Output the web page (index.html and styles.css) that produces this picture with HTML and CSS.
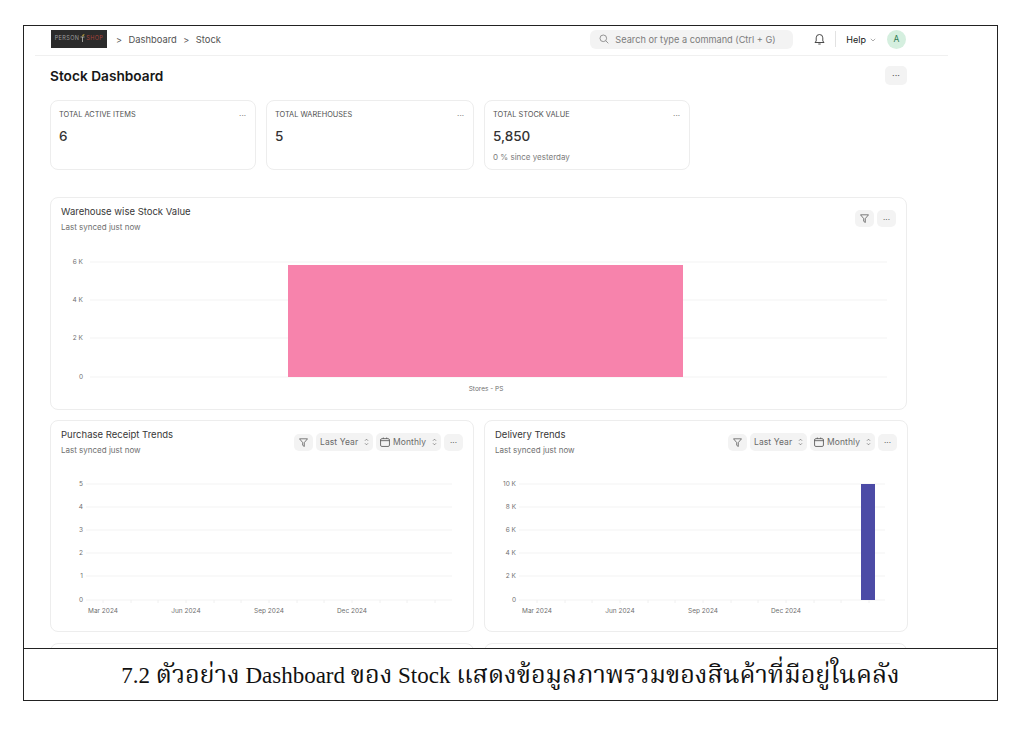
FILE: index.html
```html
<!DOCTYPE html>
<html lang="th">
<head>
<meta charset="utf-8">
<title>Stock Dashboard</title>
<link rel="stylesheet" href="styles.css">
</head>
<body>
<div class="frame">
  <div class="screen">
    <header class="navbar">
      <div class="logo"><span class="logo-a">PERSON</span><svg class="logo-mark" width="5" height="8" viewBox="0 0 5 8"><path d="M.5 3h4M2.500 3v5" stroke="#bdbdb5" stroke-width=".8" fill="none"/><path d="M2 2.500C2 1 3 0 4.500 0C4.500 1.500 3.500 2.500 2 2.500Z" fill="#a8923a"/></svg><span class="logo-b">SHOP</span></div>
      <nav class="crumbs">
        <span class="sep">&gt;</span><span>Dashboard</span><span class="sep">&gt;</span><span>Stock</span>
      </nav>
      <div class="nav-right">
        <div class="search">
          <svg class="ico" width="10" height="10" viewBox="0 0 10 10"><circle cx="4.300" cy="4.300" r="3.300" fill="none" stroke="#7c7c7c" stroke-width=".8"/><path d="M6.800 6.800L9.300 9.300" stroke="#7c7c7c" stroke-width=".8"/></svg>
          <span>Search or type a command (Ctrl + G)</span>
        </div>
        <svg class="bell" width="11" height="12" viewBox="0 0 11 12"><path d="M1 9.500h9L8.800 8V4.800a3.300 3.300 0 0 0-6.600 0V8ZM4.300 11h2.400" fill="none" stroke="#383838" stroke-width=".9"/></svg>
        <span class="vline"></span>
        <span class="help">Help</span>
        <svg class="chev" width="6" height="4" viewBox="0 0 6 4"><path d="M.8.8L3 3l2.200-2.200" fill="none" stroke="#8a8a8a" stroke-width=".7"/></svg>
        <span class="avatar">A</span>
      </div>
    </header>

    <main class="main">
      <div class="title-row">
        <h1>Stock Dashboard</h1>
        <span class="btn btn-more">···</span>
      </div>

      <section class="stats">
        <article class="stat">
          <div class="stat-head"><span>TOTAL ACTIVE ITEMS</span><i>···</i></div>
          <div class="stat-num">6</div>
        </article>
        <article class="stat">
          <div class="stat-head"><span>TOTAL WAREHOUSES</span><i>···</i></div>
          <div class="stat-num">5</div>
        </article>
        <article class="stat">
          <div class="stat-head"><span>TOTAL STOCK VALUE</span><i>···</i></div>
          <div class="stat-num">5,850</div>
          <div class="stat-sub">0 % since yesterday</div>
        </article>
      </section>

      <section class="card card-wide">
        <div class="card-head">
          <div>
            <h2>Warehouse wise Stock Value</h2>
            <p>Last synced just now</p>
          </div>
          <div class="tools">
            <span class="btn btn-icon"><svg width="9" height="9" viewBox="0 0 9 9"><path d="M.5.8h8L5.300 4.600v3.900L3.700 7.300V4.600Z" fill="none" stroke="#4a4a4a" stroke-width=".7"/></svg></span>
            <span class="btn btn-icon">···</span>
          </div>
        </div>
        <svg class="plot" viewBox="0 1 855 165" width="855" height="165">
          <g class="grid">
            <line x1="39" x2="836" y1="17" y2="17"/><line x1="39" x2="836" y1="55" y2="55"/><line x1="39" x2="836" y1="93" y2="93"/><line x1="39" x2="836" y1="132" y2="132"/>
          </g>
          <rect x="237" y="20" width="395" height="112" fill="#f783ac"/>
          <g class="axis" text-anchor="end">
            <text x="32" y="19">6 K</text><text x="32" y="57">4 K</text><text x="32" y="95">2 K</text><text x="32" y="134">0</text>
          </g>
          <text class="axis" x="435" y="146" text-anchor="middle">Stores - PS</text>
        </svg>
      </section>

      <section class="row">
        <article class="card">
          <div class="card-head">
            <div>
              <h2>Purchase Receipt Trends</h2>
              <p>Last synced just now</p>
            </div>
            <div class="tools">
              <span class="btn btn-icon"><svg width="9" height="9" viewBox="0 0 9 9"><path d="M.5.8h8L5.300 4.600v3.900L3.700 7.300V4.600Z" fill="none" stroke="#4a4a4a" stroke-width=".7"/></svg></span>
              <span class="btn btn-sel">Last Year <svg class="updown" width="5" height="8" viewBox="0 0 5 8"><path d="M1 2.700L2.500 1.200 4 2.700M1 5.300L2.500 6.800 4 5.300" fill="none" stroke="#666" stroke-width=".7"/></svg></span>
              <span class="btn btn-sel btn-month"><svg width="10" height="10" viewBox="0 0 9 9"><rect x=".5" y="1.500" width="8" height="7" rx="1.200" fill="none" stroke="#4a4a4a" stroke-width=".7"/><path d="M.5 3.300h8M3 .5v1M6 .5v1" stroke="#4a4a4a" stroke-width=".7"/></svg>Monthly <svg class="updown" width="5" height="8" viewBox="0 0 5 8"><path d="M1 2.700L2.500 1.200 4 2.700M1 5.300L2.500 6.800 4 5.300" fill="none" stroke="#666" stroke-width=".7"/></svg></span>
              <span class="btn btn-icon">···</span>
            </div>
          </div>
          <svg class="plot" viewBox="0 -1 422 160" width="422" height="160">
            <g class="grid">
              <line x1="35" x2="401" y1="14" y2="14"/><line x1="35" x2="401" y1="37" y2="37"/><line x1="35" x2="401" y1="60" y2="60"/><line x1="35" x2="401" y1="83" y2="83"/><line x1="35" x2="401" y1="106" y2="106"/><line x1="35" x2="401" y1="130" y2="130"/>
            </g>
            <path class="ticks" d="M52 130v3M80 130v3M107 130v3M135 130v3M163 130v3M190 130v3M218 130v3M246 130v3M273 130v3M301 130v3M329 130v3M356 130v3M384 130v3"/>
            <g class="axis" text-anchor="end">
              <text x="32" y="16">5</text><text x="32" y="39">4</text><text x="32" y="62">3</text><text x="32" y="85">2</text><text x="32" y="108">1</text><text x="32" y="132">0</text>
            </g>
            <g class="axis" text-anchor="middle">
              <text x="52" y="143">Mar 2024</text><text x="135" y="143">Jun 2024</text><text x="218" y="143">Sep 2024</text><text x="301" y="143">Dec 2024</text>
            </g>
          </svg>
        </article>

        <article class="card">
          <div class="card-head">
            <div>
              <h2>Delivery Trends</h2>
              <p>Last synced just now</p>
            </div>
            <div class="tools">
              <span class="btn btn-icon"><svg width="9" height="9" viewBox="0 0 9 9"><path d="M.5.8h8L5.300 4.600v3.900L3.700 7.300V4.600Z" fill="none" stroke="#4a4a4a" stroke-width=".7"/></svg></span>
              <span class="btn btn-sel">Last Year <svg class="updown" width="5" height="8" viewBox="0 0 5 8"><path d="M1 2.700L2.500 1.200 4 2.700M1 5.300L2.500 6.800 4 5.300" fill="none" stroke="#666" stroke-width=".7"/></svg></span>
              <span class="btn btn-sel btn-month"><svg width="10" height="10" viewBox="0 0 9 9"><rect x=".5" y="1.500" width="8" height="7" rx="1.200" fill="none" stroke="#4a4a4a" stroke-width=".7"/><path d="M.5 3.300h8M3 .5v1M6 .5v1" stroke="#4a4a4a" stroke-width=".7"/></svg>Monthly <svg class="updown" width="5" height="8" viewBox="0 0 5 8"><path d="M1 2.700L2.500 1.200 4 2.700M1 5.300L2.500 6.800 4 5.300" fill="none" stroke="#666" stroke-width=".7"/></svg></span>
              <span class="btn btn-icon">···</span>
            </div>
          </div>
          <svg class="plot" viewBox="0 -1 422 160" width="422" height="160">
            <g class="grid">
              <line x1="34" x2="400" y1="14" y2="14"/><line x1="34" x2="400" y1="37" y2="37"/><line x1="34" x2="400" y1="60" y2="60"/><line x1="34" x2="400" y1="83" y2="83"/><line x1="34" x2="400" y1="106" y2="106"/><line x1="34" x2="400" y1="130" y2="130"/>
            </g>
            <path class="ticks" d="M52 130v3M80 130v3M107 130v3M135 130v3M163 130v3M190 130v3M218 130v3M246 130v3M273 130v3M301 130v3M329 130v3M356 130v3M384 130v3"/>
            <rect x="376" y="14" width="14" height="116" fill="#4c4ba6"/>
            <g class="axis" text-anchor="end">
              <text x="31" y="16">10 K</text><text x="31" y="39">8 K</text><text x="31" y="62">6 K</text><text x="31" y="85">4 K</text><text x="31" y="108">2 K</text><text x="31" y="132">0</text>
            </g>
            <g class="axis" text-anchor="middle">
              <text x="52" y="143">Mar 2024</text><text x="135" y="143">Jun 2024</text><text x="218" y="143">Sep 2024</text><text x="301" y="143">Dec 2024</text>
            </g>
          </svg>
        </article>
      </section>

      <section class="row row-next">
        <div class="card"></div>
        <div class="card"></div>
      </section>
    </main>
  </div>
  <footer class="caption"><span class="en">7.2</span> <span class="th">ตัวอย่าง</span> <span class="en">Dashboard</span> <span class="th">ของ</span> <span class="en">Stock</span> <span class="th">แสดงข้อมูลภาพรวมของสินค้าที่มีอยู่ในคลัง</span></footer>
</div>
</body>
</html>
```
FILE: styles.css
```css
* { box-sizing: border-box; }
html, body { margin: 0; padding: 0; background: #fff; }
body { font-family: Inter, "Liberation Sans", sans-serif; color: #383838; }

.frame {
  width: 975px;
  height: 676px;
  margin: 25px 0 0 23px;
  border: 1px solid #222;
  display: flex;
  flex-direction: column;
}
.screen { flex: 1; min-height: 0; overflow: hidden; }
.caption {
  height: 52px;
  flex: none;
  border-top: 1px solid #222;
  font-family: "Liberation Serif", "Noto Serif Thai", "Noto Sans Thai", serif;
  font-size: 23px;
  line-height: 51px;
  text-align: center;
  color: #111;
}
.caption .th { font-size: 25.200px; }

/* top bar */
.navbar {
  width: 913px;
  height: 30px;
  margin-left: 11px;
  padding: 4px 42px 0 16px;
  border-bottom: 1px solid #f0f0f0;
  display: flex;
  align-items: flex-start;
}
.logo {
  width: 56px;
  height: 18px;
  background: #2b2b2b;
  display: flex;
  align-items: center;
  justify-content: center;
  font-size: 5.500px;
  letter-spacing: .4px;
  line-height: 1;
  flex: none;
}
.logo-a { color: #9c9c9c; }
.logo-b { color: #a8433a; }
.logo-mark { margin: -3px 1px 0; }
.crumbs {
  display: flex;
  align-items: center;
  height: 18px;
  margin-left: 9px;
  font-size: 9.400px;
  color: #525252;
  gap: 6.500px;
}
.sep { font-size: 9px; color: #555; }
.nav-right { margin-left: auto; display: flex; align-items: center; height: 20px; margin-top: -1px; }
.search {
  width: 203px;
  height: 19px;
  border-radius: 6px;
  background: #f3f3f3;
  display: flex;
  align-items: center;
  gap: 6px;
  padding-left: 9px;
  font-size: 9.200px;
  color: #7c7c7c;
}
.bell { margin-left: 21px; }
.vline { width: 1px; height: 16px; background: #e2e2e2; margin: 0 10px 0 10px; }
.help { font-size: 9px; color: #171717; }
.chev { margin: 1px 0 0 4px; }
.avatar {
  width: 19px;
  height: 19px;
  margin-left: 11px;
  border-radius: 50%;
  background: #d5efdf;
  color: #2f7d55;
  font-size: 8.500px;
  display: flex;
  align-items: center;
  justify-content: center;
}

/* page */
.main { width: 857px; margin-left: 26px; }
.title-row {
  height: 45px;
  display: flex;
  align-items: center;
  justify-content: space-between;
  padding-bottom: 6px;
}
h1 { margin: 0; font-size: 13.700px; font-weight: 600; color: #171717; }

.btn {
  background: #f3f3f3;
  border-radius: 5px;
  display: flex;
  align-items: center;
  justify-content: center;
  color: #525252;
  font-size: 8.500px;
  line-height: 1;
}
.btn-more { width: 22px; height: 19px; font-size: 9px; }
.btn-icon { width: 19px; height: 17px; font-size: 8px; }
.btn-sel { width: 57px; height: 18px; gap: 3px; letter-spacing: .1px; justify-content: flex-start; padding-left: 4px; color: #6a6a6a; }
.btn-month { width: 65px; }
.updown { margin-left: 3px; }

/* number cards */
.stats {
  display: grid;
  grid-template-columns: 206px 208px 206px;
  gap: 10px;
  margin-top: -1px;
}
.stat {
  height: 70px;
  border: 1px solid #ededed;
  border-radius: 8px;
  padding: 9px 8px 0;
}
.stat-head {
  display: flex;
  justify-content: space-between;
  font-size: 7.400px;
  line-height: 10px;
  color: #525252;
}
.stat-head i { font-style: normal; color: #777; font-size: 8px; margin-right: 1px; }
.stat-num { margin-top: 7px; font-size: 13.500px; font-weight: 500; line-height: 18px; color: #333; }
.stat-sub { margin-top: 7px; font-size: 8px; line-height: 10px; color: #7c7c7c; }

/* chart cards */
.card {
  border: 1px solid #ededed;
  border-radius: 8px;
  background: #fff;
}
.card-wide { height: 213px; margin-top: 27px; }
.card-head {
  height: 48px;
  padding: 8px 10px 0;
  display: flex;
  justify-content: space-between;
  align-items: flex-start;
}
h2 { margin: 0; font-size: 9.500px; font-weight: 400; line-height: 12px; color: #383838; }
.card-head p { margin: 3px 0 0; font-size: 8px; line-height: 12px; color: #6f6f6f; }
.tools { display: flex; gap: 3px; align-items: center; margin-top: 4px; }
.plot { display: block; }
.grid line { stroke: #f3f3f3; stroke-width: 1; }
.ticks { stroke: #f0f0f0; stroke-width: 1; fill: none; }
.axis { font-size: 6.500px; fill: #6f6f6f; }
.axis text { font-size: 6.500px; fill: #6f6f6f; }

.row {
  display: grid;
  grid-template-columns: 1fr 1fr;
  gap: 10px;
  margin-top: 10px;
}
.row > .card { height: 212px; }
.row-next { margin-top: 11px; }
```
